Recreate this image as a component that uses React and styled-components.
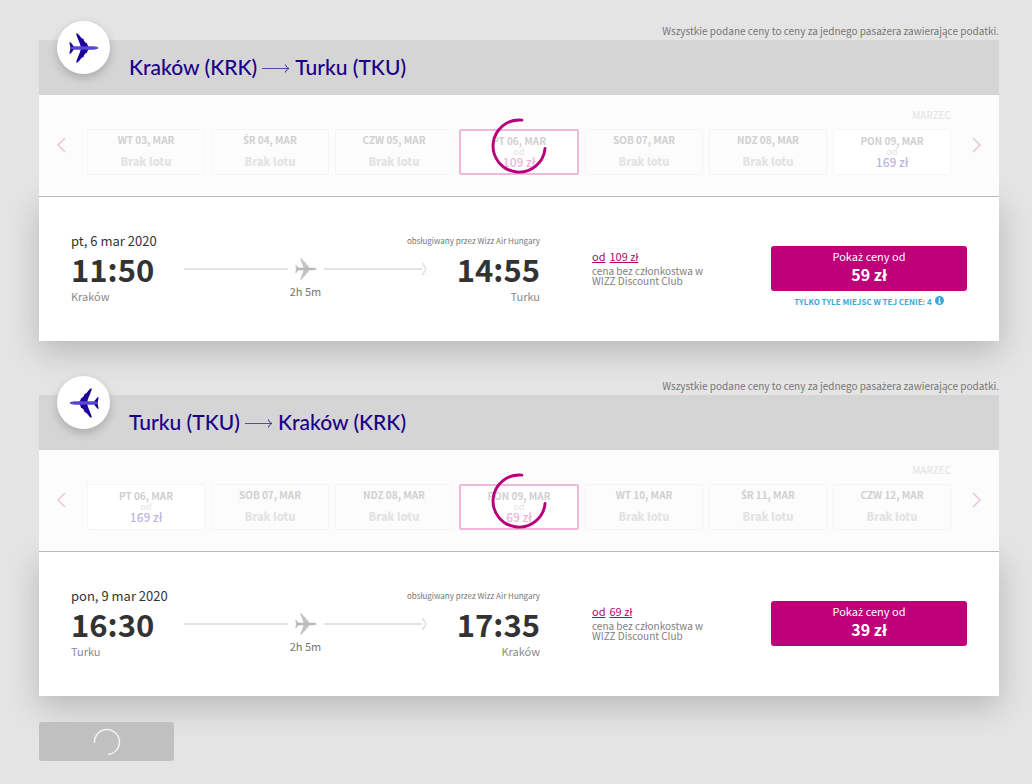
// App.jsx
import React from "react";
import styled, { createGlobalStyle } from "styled-components";

const GlobalStyle = createGlobalStyle`
  * {
    box-sizing: border-box;
  }

  body {
    margin: 0;
    background-color: #e4e4e4;
    color: #333;
    font-family: "Noto Sans CJK SC", "Noto Sans", sans-serif;
    font-size: 12px;
  }

  button {
    font-family: inherit;
    border: 0;
    padding: 0;
    cursor: pointer;
  }
`;

const Page = styled.main`
  padding: 22px 33px 22px 39px;
`;

const Section = styled.section`
  margin-bottom: 36px;

  &:last-of-type {
    margin-bottom: 26px;
  }
`;

// The main font has no glyphs for these Polish letters
const PolishLetter = styled.span`
  font-family: "Noto Sans", sans-serif;
  line-height: 1;
`;

const TaxNote = styled.p`
  margin: 0;
  font-size: 10px;
  line-height: 18px;
  color: #777;
  text-align: right;
`;

const Card = styled.div`
  background-color: #fff;
`;

// Header
const CardHeader = styled.header`
  position: relative;
  z-index: 1;
  display: flex;
  align-items: center;
  height: 55px;
  padding: 0 0 2px 90px;
  background-color: #d5d5d5;
`;

const PlaneBadge = styled.div`
  position: absolute;
  top: -19px;
  left: 18px;
  display: flex;
  align-items: center;
  justify-content: center;
  width: 53px;
  height: 53px;
  border-radius: 50%;
  background-color: #fff;
  box-shadow: 0 4px 10px rgba(0, 0, 0, 0.2);
`;

const Title = styled.h2`
  display: flex;
  align-items: center;
  gap: 5px;
  margin: 0;
  font-family: Lato, sans-serif;
  font-size: 21px;
  font-weight: 500;
  line-height: 24px;
  color: #1b0088;
`;

// Date picker
const DatePicker = styled.div`
  position: relative;
  display: flex;
  flex-direction: column;
  height: 102px;
  padding: 12px 17px 0;
  background-color: #fcfcfc;
  border-bottom: 1px solid #b9b9b9;
`;

const Month = styled.div`
  padding-right: 31px;
  margin-bottom: 6px;
  font-size: 10px;
  line-height: 16px;
  color: #e2e2e2;
  text-align: right;
`;

const DateRow = styled.div`
  display: flex;
  align-items: center;
  justify-content: space-between;
`;

const ArrowButton = styled.button`
  display: flex;
  width: 10px;
  height: 16px;
  margin-bottom: 15px;
  background: none;
  color: #efc4df;
`;

const DateList = styled.div`
  display: flex;
  flex: 1;
  gap: 6px;
  margin: 0 21px;
`;

const DateButton = styled.button`
  display: flex;
  flex: 1;
  flex-direction: column;
  align-items: center;
  justify-content: center;
  height: 46px;
  padding-bottom: 2px;
  border: ${(props) => (props.$selected ? "2px solid #ecb9da" : "1px solid #f5f5f5")};
  border-radius: 2px;
  background-color: ${(props) => (props.$available ? "#fff" : "#fcfcfc")};
`;

const DateLabel = styled.span`
  margin-bottom: ${(props) => (props.$spaced ? "8px" : "0")};
  font-size: 10px;
  font-weight: 700;
  line-height: 12px;
  color: #d0d0d0;
`;

const DateFrom = styled.span`
  font-size: 9px;
  line-height: 9px;
  color: #e2e2e2;
`;

const DatePrice = styled.span`
  font-size: 12px;
  font-weight: 500;
  line-height: 11px;
  color: ${(props) => (props.$selected ? "#ecb3d8" : "#bdb5e0")};
`;

const NoFlight = styled.span`
  font-size: 11px;
  font-weight: 900;
  line-height: 14px;
  color: #e3e3e3;
`;

const Overlay = styled.div`
  position: absolute;
  inset: 0;
  display: flex;
  align-items: center;
  justify-content: center;
`;

// Flight row
const FlightRow = styled.div`
  display: grid;
  grid-template-columns: minmax(0, 1fr) 127px 196px;
  column-gap: 52px;
  height: 144px;
  padding: 34px 32px 0;
  box-shadow: 0 10px 30px rgba(0, 0, 0, 0.2);
`;

const Flight = styled.div`
  display: flex;
  flex-direction: column;
`;

const FlightTop = styled.div`
  display: flex;
  align-items: center;
  justify-content: space-between;
  height: 20px;
  margin-bottom: 5px;
`;

const FlightDate = styled.span`
  font-size: 13px;
  line-height: 20px;
`;

const Operator = styled.span`
  font-size: 8px;
  line-height: 12px;
  color: #777;
`;

const FlightTimes = styled.div`
  display: flex;
  justify-content: space-between;
`;

const Stop = styled.div`
  width: 113px;
  text-align: ${(props) => (props.$end ? "right" : "left")};
`;

const Time = styled.div`
  font-size: 31px;
  font-weight: 700;
  line-height: 26px;
`;

const City = styled.div`
  margin-top: 5px;
  font-size: 11px;
  line-height: 18px;
  color: #8a8a8a;
`;

const Route = styled.div`
  flex: 1;
  text-align: center;
`;

const RouteLine = styled.div`
  display: flex;
  align-items: center;
  gap: 7px;
  height: 26px;
`;

const Line = styled.span`
  flex: 1;
  height: 2px;
  background-color: #e2e2e2;
`;

const LineWithHead = styled.span`
  display: flex;
  flex: 1;
  align-items: center;
`;

const Duration = styled.div`
  font-size: 11px;
  line-height: 18px;
  color: #777;
`;

const RegularPrice = styled.div`
  padding-top: 17px;
  font-size: 10px;
  line-height: 10px;
  color: #808080;
`;

const PriceLinks = styled.div`
  display: flex;
  gap: 4px;
  margin-bottom: 2px;
`;

const PriceLink = styled.a`
  font-size: 11px;
  line-height: 16px;
  color: #b5006f;
`;

const Offer = styled.div`
  padding-top: 15px;
  text-align: center;
`;

const OfferButton = styled.button`
  display: block;
  width: 100%;
  height: 45px;
  padding-bottom: 7px;
  border-radius: 3px;
  background-color: #be0079;
  color: #fff;
  font-size: 11px;
  line-height: 18px;

  strong {
    display: block;
    font-size: 16px;
  }
`;

const SeatsLeft = styled.div`
  display: flex;
  align-items: flex-start;
  justify-content: center;
  gap: 3px;
  margin-top: 5px;
  font-size: 8px;
  font-weight: 700;
  line-height: 12px;
  color: #3ba7db;
`;

const SubmitButton = styled.button`
  position: relative;
  display: flex;
  align-items: center;
  justify-content: center;
  width: 135px;
  height: 39px;
  border-radius: 3px;
  background-color: #c0c0c0;
`;

const flights = [
  {
    from: "Kraków",
    fromCode: "KRK",
    to: "Turku",
    toCode: "TKU",
    dates: [
      { label: "WT 03, MAR" },
      { label: "ŚR 04, MAR" },
      { label: "CZW 05, MAR" },
      { label: "PT 06, MAR", price: "109 zł", selected: true },
      { label: "SOB 07, MAR" },
      { label: "NDZ 08, MAR" },
      { label: "PON 09, MAR", price: "169 zł" },
    ],
    date: "pt, 6 mar 2020",
    departure: "11:50",
    arrival: "14:55",
    regularPrice: "109 zł",
    price: "59 zł",
    seats: 4,
  },
  {
    from: "Turku",
    fromCode: "TKU",
    to: "Kraków",
    toCode: "KRK",
    inbound: true,
    dates: [
      { label: "PT 06, MAR", price: "169 zł" },
      { label: "SOB 07, MAR" },
      { label: "NDZ 08, MAR" },
      { label: "PON 09, MAR", price: "69 zł", selected: true },
      { label: "WT 10, MAR" },
      { label: "ŚR 11, MAR" },
      { label: "CZW 12, MAR" },
    ],
    date: "pon, 9 mar 2020",
    departure: "16:30",
    arrival: "17:35",
    regularPrice: "69 zł",
    price: "39 zł",
  },
];

const Polish = ({ children }) =>
  children
    .split(/([żŚą])/)
    .map((part, index) => (index % 2 ? <PolishLetter key={index}>{part}</PolishLetter> : part));

const Plane = ({ size, wings, body, flipped }) => (
  <svg width={size} height={size} viewBox="0 0 30 30" aria-hidden="true">
    <g transform={flipped ? "translate(30 0) scale(-1 1)" : undefined}>
      <path
        fill={wings}
        d="M7 0.5L9 0.8 12.5 5 14.5 6 15 7.7 16.5 9.5 18 10.2 18.5 12 19.5 13.5V16.5L18.5 18 18 19.8 16.5 20.5 15 22.3 14.5 24 12.5 25 9 29.2 7 29.5 8 26.5 11.2 18.5 11.5 17V13L11.2 11.5 8 3.5Z"
      />
      <path fill={wings} d="M0.3 9.3H1.5L5 13.5V16.5L1.5 20.7H0.3L1.3 16V14Z" />
      <path
        fill={body}
        d="M1 14.5l3-1.2h20c3 0 5.5 1 5.5 1.7s-2.5 1.7-5.5 1.7H4l-3-1.2z"
      />
    </g>
  </svg>
);

const TitleArrow = () => (
  <svg width="28" height="12" viewBox="0 0 28 12" fill="none" stroke="#5a4aa0" aria-hidden="true">
    <path d="M0 7.5h26" />
    <path d="M23.5 3.5c.5 2.2 1.5 3.5 3.5 4-2 .5-3 1.8-3.5 4" stroke="#3a2493" />
  </svg>
);

const Chevron = ({ right }) => (
  <svg width="10" height="16" viewBox="0 0 10 16" fill="none" stroke="currentColor" strokeWidth="1.5">
    <path d={right ? "M1 1l7 7-7 7" : "M9 1l-7 7 7 7"} />
  </svg>
);

const ArrowHead = () => (
  <svg width="5" height="14" viewBox="0 0 5 14" fill="none" stroke="#e2e2e2" strokeWidth="1.5" aria-hidden="true">
    <path d="M0.5 1l3.5 6-3.5 6" />
  </svg>
);

const Spinner = () => (
  <svg width="56" height="56" viewBox="0 0 58 58" role="img" aria-label="Ładowanie">
    <path
      d="M56 31.5A27 27 0 1 1 32 2.2"
      fill="none"
      stroke="#b8007a"
      strokeWidth="3"
      strokeLinecap="round"
    />
  </svg>
);

const InfoIcon = () => (
  <svg width="9" height="9" viewBox="0 0 9 9" aria-hidden="true">
    <circle cx="4.5" cy="4.5" r="4.5" fill="#3ba7db" />
    <path d="M4.5 1.7v1.2M3.5 4h1v2.7M3.3 6.9h2.6" stroke="#fff" strokeWidth="1.2" fill="none" />
  </svg>
);

const DateOption = ({ label, price, selected }) => (
  <DateButton type="button" $selected={selected} $available={Boolean(price)}>
    <DateLabel $spaced={!price}>
      <Polish>{label}</Polish>
    </DateLabel>
    {price ? (
      <>
        <DateFrom>od</DateFrom>
        <DatePrice $selected={selected}>{price}</DatePrice>
      </>
    ) : (
      <NoFlight>Brak lotu</NoFlight>
    )}
  </DateButton>
);

const FlightSection = ({ flight }) => (
  <Section>
    <TaxNote>
      <Polish>Wszystkie podane ceny to ceny za jednego pasażera zawierające podatki.</Polish>
    </TaxNote>
    <Card>
      <CardHeader>
        <PlaneBadge>
          <Plane size={30} wings="#1f0099" body="#5546d8" flipped={flight.inbound} />
        </PlaneBadge>
        <Title>
          <span>
            {flight.from} ({flight.fromCode})
          </span>
          <TitleArrow />
          <span>
            {flight.to} ({flight.toCode})
          </span>
        </Title>
      </CardHeader>

      <DatePicker>
        <Month>MARZEC</Month>
        <DateRow>
          <ArrowButton type="button" aria-label="Poprzednie">
            <Chevron />
          </ArrowButton>
          <DateList>
            {flight.dates.map((date) => (
              <DateOption key={date.label} {...date} />
            ))}
          </DateList>
          <ArrowButton type="button" aria-label="Następne">
            <Chevron right />
          </ArrowButton>
        </DateRow>
        <Overlay>
          <Spinner />
        </Overlay>
      </DatePicker>

      <FlightRow>
        <Flight>
          <FlightTop>
            <FlightDate>{flight.date}</FlightDate>
            <Operator>obsługiwany przez Wizz Air Hungary</Operator>
          </FlightTop>
          <FlightTimes>
            <Stop>
              <Time>{flight.departure}</Time>
              <City>{flight.from}</City>
            </Stop>
            <Route>
              <RouteLine>
                <Line />
                <Plane size={22} wings="#c4c4c4" body="#b8b8b8" />
                <LineWithHead>
                  <Line />
                  <ArrowHead />
                </LineWithHead>
              </RouteLine>
              <Duration>2h 5m</Duration>
            </Route>
            <Stop $end>
              <Time>{flight.arrival}</Time>
              <City>{flight.to}</City>
            </Stop>
          </FlightTimes>
        </Flight>

        <RegularPrice>
          <PriceLinks>
            <PriceLink href="#cena">od</PriceLink>
            <PriceLink href="#cena">{flight.regularPrice}</PriceLink>
          </PriceLinks>
          cena bez członkostwa w WIZZ Discount Club
        </RegularPrice>

        <Offer>
          <OfferButton type="button">
            <Polish>Pokaż ceny od</Polish>
            <strong>{flight.price}</strong>
          </OfferButton>
          {flight.seats && (
            <SeatsLeft>
              TYLKO TYLE MIEJSC W TEJ CENIE: {flight.seats}
              <InfoIcon />
            </SeatsLeft>
          )}
        </Offer>
      </FlightRow>
    </Card>
  </Section>
);

const App = () => {
  return (
    <>
      <GlobalStyle />
      <Page>
        {flights.map((flight) => (
          <FlightSection key={flight.fromCode} flight={flight} />
        ))}
        <SubmitButton type="button" aria-label="Kontynuuj">
          <svg width="28" height="28" viewBox="0 0 28 28" fill="none" aria-hidden="true">
            <path d="M1.5 15A12.5 12.5 0 1 1 15 26.5" stroke="#f2f2f2" strokeWidth="1.5" />
          </svg>
        </SubmitButton>
      </Page>
    </>
  );
};

export default App;
